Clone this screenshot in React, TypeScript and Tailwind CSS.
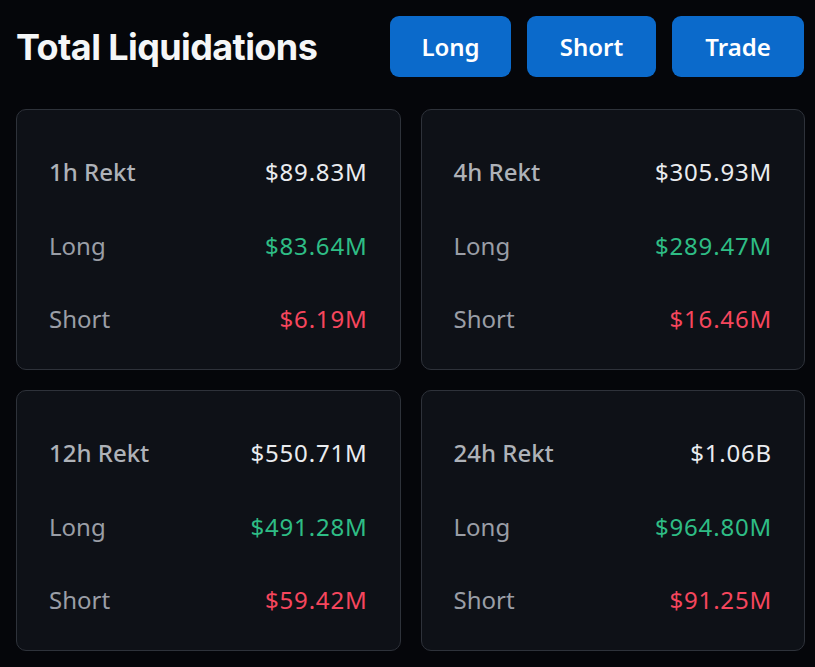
import React from "react";

type Card = { title: string; total: string; long: string; short: string };

const cards: Card[] = [
  { title: "1h Rekt", total: "$89.83M", long: "$83.64M", short: "$6.19M" },
  { title: "4h Rekt", total: "$305.93M", long: "$289.47M", short: "$16.46M" },
  { title: "12h Rekt", total: "$550.71M", long: "$491.28M", short: "$59.42M" },
  { title: "24h Rekt", total: "$1.06B", long: "$964.80M", short: "$91.25M" },
];

function StatCard({ c }: { c: Card }) {
  return (
    <div className="h-[261px] rounded-[10px] border border-[#2e323a] bg-[#0e1117] pl-[32px] pr-[32px] pt-[47px] flex flex-col gap-[43.5px]">
      <div className="flex items-center justify-between h-[30px] text-[24px] leading-[30px]">
        <span className="font-medium text-[#aeb2b8]">{c.title}</span>
        <span className="text-[#eaecef] tracking-[0.8px]">{c.total}</span>
      </div>
      <div className="flex items-center justify-between h-[30px] text-[24px] leading-[30px]">
        <span className="text-[#9a9ea6]">Long</span>
        <span className="text-[#2ebd85] tracking-[0.8px]">{c.long}</span>
      </div>
      <div className="flex items-center justify-between h-[30px] text-[24px] leading-[30px]">
        <span className="text-[#9a9ea6]">Short</span>
        <span className="text-[#f6465d] tracking-[0.8px]">{c.short}</span>
      </div>
    </div>
  );
}

export default function App() {
  return (
    <div
      className="w-[815px] h-[667px] bg-[#05060a] pt-[16px] px-[16px] overflow-hidden"
      style={{ fontFamily: '"Noto Sans", "Open Sans", sans-serif' }}
    >
      <div className="flex items-center justify-between h-[61px] mr-[-5px]">
        <h1 className="text-[36px] font-bold text-[#f5f6f7] tracking-[-0.6px] leading-none" style={{ fontFamily: 'Inter, "Noto Sans", sans-serif' }}>
          Total Liquidations
        </h1>
        <div className="flex gap-[16px]">
          <button className="w-[121px] h-[61px] rounded-[9px] bg-[#0b6acb] text-white text-[24px] font-semibold">Long</button>
          <button className="w-[129px] h-[61px] rounded-[9px] bg-[#0b6acb] text-white text-[24px] font-semibold">Short</button>
          <button className="w-[132px] h-[61px] rounded-[9px] bg-[#0b6acb] text-white text-[24px] font-semibold">Trade</button>
        </div>
      </div>
      <div className="mt-[32px] grid grid-cols-2 gap-x-[20px] gap-y-[20px] w-[789px]">
        {cards.map((c) => (
          <StatCard key={c.title} c={c} />
        ))}
      </div>
    </div>
  );
}
